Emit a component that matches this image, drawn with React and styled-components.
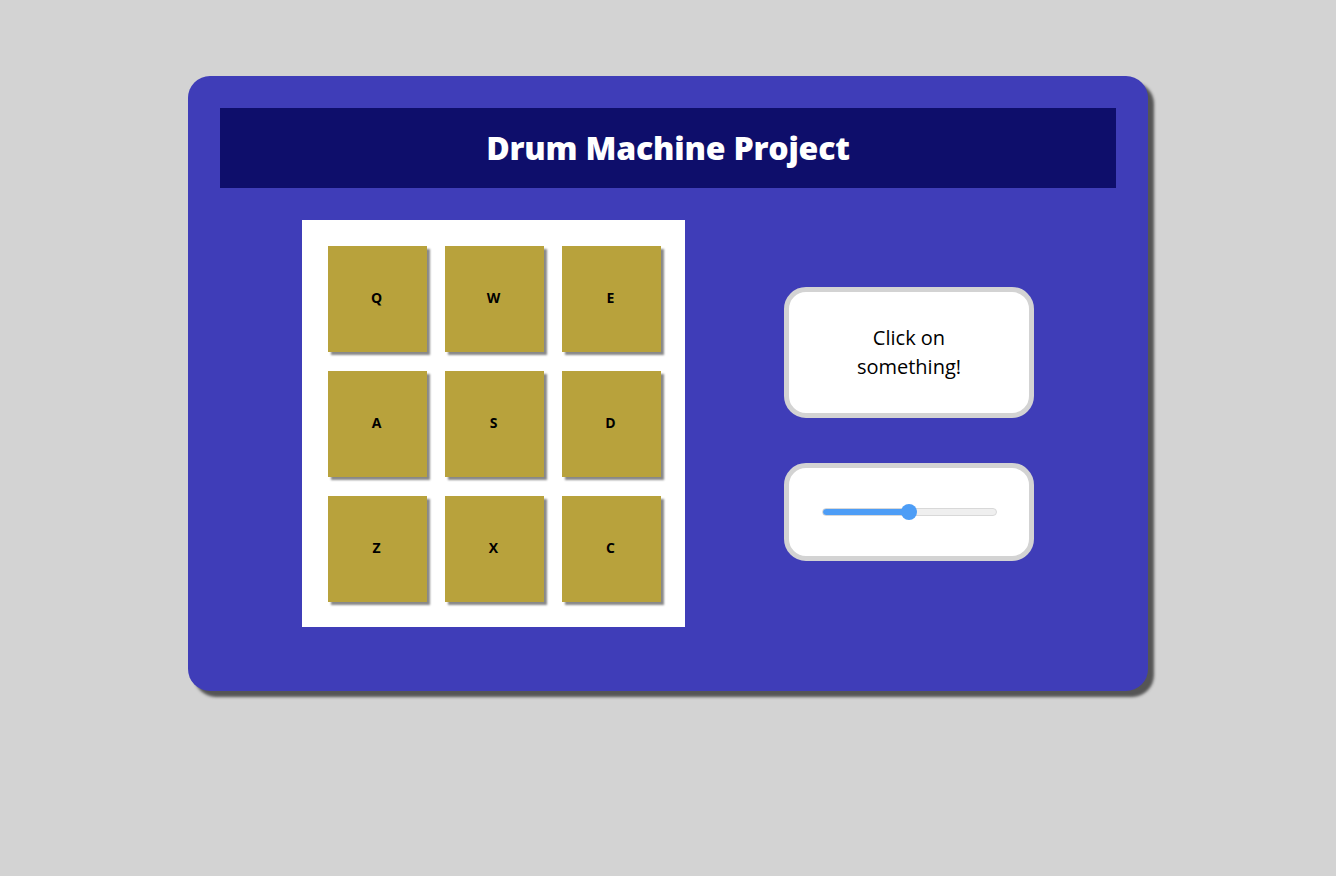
import React, { useState } from "react";
import styled, { createGlobalStyle } from "styled-components";

const GlobalStyle = createGlobalStyle`
  html, body {
    margin: 0;
    padding: 0;
    background: #d3d3d3;
    font-family: "Open Sans", "Liberation Sans", sans-serif;
  }
`;

const pads = ["Q", "W", "E", "A", "S", "D", "Z", "X", "C"];

const App = () => {
  const [volume, setVolume] = useState(50);

  return (
    <>
      <GlobalStyle />
      <Page>
        <Machine>
          <Header>
            <Title>Drum Machine Project</Title>
          </Header>
          <Body>
            <PadGrid>
              {pads.map((key) => (
                <Pad key={key}>{key}</Pad>
              ))}
            </PadGrid>
            <Controls>
              <Display>
                <DisplayText>Click on something!</DisplayText>
              </Display>
              <VolumeBox>
                <Slider
                  type="range"
                  min="0"
                  max="100"
                  value={volume}
                  onChange={(e) => setVolume(e.target.value)}
                  style={{ "--fill": `${volume}%` }}
                />
              </VolumeBox>
            </Controls>
          </Body>
        </Machine>
      </Page>
    </>
  );
};

const Page = styled.div`
  min-height: 876px;
  padding-top: 76px;
  box-sizing: border-box;
  display: flex;
  justify-content: center;
  align-items: flex-start;
`;

const Machine = styled.div`
  width: 960px;
  box-sizing: border-box;
  padding: 32px 32px 64px;
  background: #3f3db8;
  border-radius: 22px;
  box-shadow: 6px 6px 3px #555;
`;

const Header = styled.header`
  height: 80px;
  background: #0e0e6b;
  display: flex;
  align-items: center;
  justify-content: center;
`;

const Title = styled.h1`
  margin: 0;
  color: #fff;
  font-size: 32px;
  font-weight: 800;
  letter-spacing: -0.2px;
  margin-top: -2px;
`;

const Body = styled.div`
  margin-top: 32px;
  display: flex;
  justify-content: center;
  align-items: center;
  gap: 99px;
`;

const PadGrid = styled.div`
  width: 383px;
  box-sizing: border-box;
  padding: 26px 24px 25px 26px;
  background: #fff;
  display: grid;
  grid-template-columns: repeat(3, 99px);
  grid-auto-rows: 106px;
  column-gap: 18px;
  row-gap: 19px;
`;

const Pad = styled.div`
  background: #b8a23c;
  box-shadow: 3px 3px 2px #888;
  display: flex;
  align-items: center;
  justify-content: center;
  padding: 0 2px 3px 0;
  box-sizing: border-box;
  font-size: 14px;
  font-weight: 700;
  color: #000;
  cursor: pointer;
`;

const Controls = styled.div`
  display: flex;
  flex-direction: column;
  gap: 45px;
`;

const Box = styled.div`
  width: 250px;
  box-sizing: border-box;
  background: #fff;
  border: 5px solid #d3d3d3;
  border-radius: 22px;
  display: flex;
  align-items: center;
  justify-content: center;
`;

const Display = styled(Box)`
  height: 131px;
`;

const DisplayText = styled.p`
  margin: 0;
  width: 130px;
  text-align: center;
  font-size: 20px;
  line-height: 29px;
  color: #000;
`;

const VolumeBox = styled(Box)`
  height: 98px;
`;

const Slider = styled.input`
  -webkit-appearance: none;
  appearance: none;
  width: 175px;
  height: 8px;
  margin: 0;
  border-radius: 4px;
  border: 1px solid #d8d8d8;
  box-sizing: border-box;
  background: linear-gradient(
    to right,
    #4d9df6 var(--fill),
    #efefef var(--fill)
  );
  outline: none;

  &::-webkit-slider-thumb {
    -webkit-appearance: none;
    width: 16px;
    height: 16px;
    border-radius: 50%;
    background: #4d9df6;
    border: none;
  }
`;

export default App;
